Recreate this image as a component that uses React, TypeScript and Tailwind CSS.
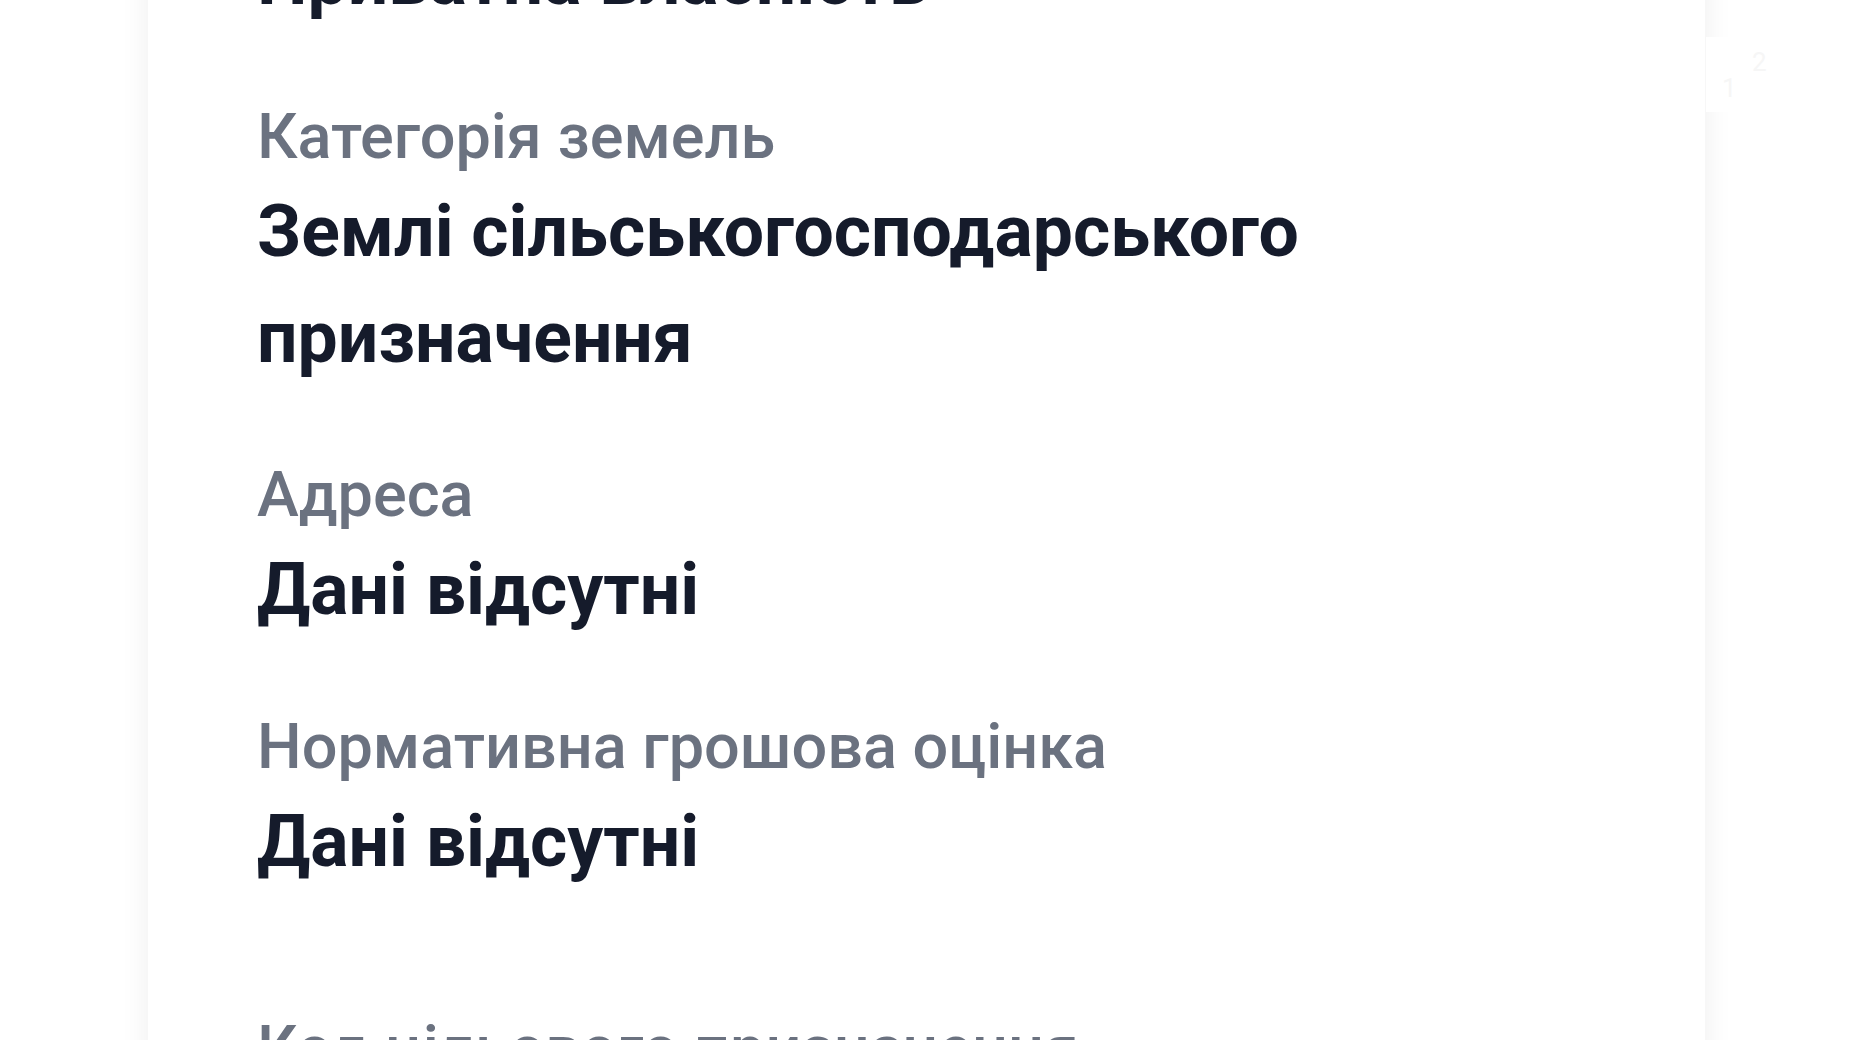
import React from 'react';

type Field = { label: string; value: string[] };

const fields: Field[] = [
    { label: 'Категорія земель', value: ['Землі сільськогосподарського', 'призначення'] },
    { label: 'Адреса', value: ['Дані відсутні'] },
    { label: 'Нормативна грошова оцінка', value: ['Дані відсутні'] },
];

function FieldRow({ label, value }: Field) {
    return (
        <div className="mb-[69px]">
            <div className="text-[63px] leading-[70px] font-medium text-[#6b7280]">{label}</div>
            <div className="mt-[7px] text-[71.5px] leading-[106px] font-bold text-[#151b2b]">
                {value.map((line, i) => (
                    <div key={i}>{line}</div>
                ))}
            </div>
        </div>
    );
}

export default function App() {
    return (
        <div className="relative h-[1040px] w-full overflow-hidden bg-white" style={{ fontFamily: 'Roboto, "Noto Sans", sans-serif' }}>
            <div className="ml-[148px] w-[1557px] -mt-[73px] bg-white pl-[109px] shadow-[0_0_28px_rgba(0,0,0,0.07)]">
                {/* top value, cut off by the viewport */}
                <div className="mb-[69px] text-[71.5px] leading-[106px] font-bold text-[#151b2b]">Приватна власність</div>

                {fields.map((f) => (
                    <FieldRow key={f.label} {...f} />
                ))}

                <div className="pt-[50px] pb-[200px]">
                    <div className="text-[63px] leading-[70px] font-medium text-[#6b7280]">Код цільового призначення</div>
                    <div className="mt-[7px] text-[71.5px] leading-[106px] font-bold text-[#151b2b]">01.01</div>
                </div>
            </div>

            {/* faded floating hint over the card edge */}
            <div className="absolute left-[1706px] top-[37px] flex h-[75px] w-[70px] flex-col items-start justify-center bg-white pl-[16px] text-[26px] leading-[26px] text-[#f6f6f6]">
                <span className="pl-[30px]">2</span>
                <span>1</span>
            </div>
        </div>
    );
}
